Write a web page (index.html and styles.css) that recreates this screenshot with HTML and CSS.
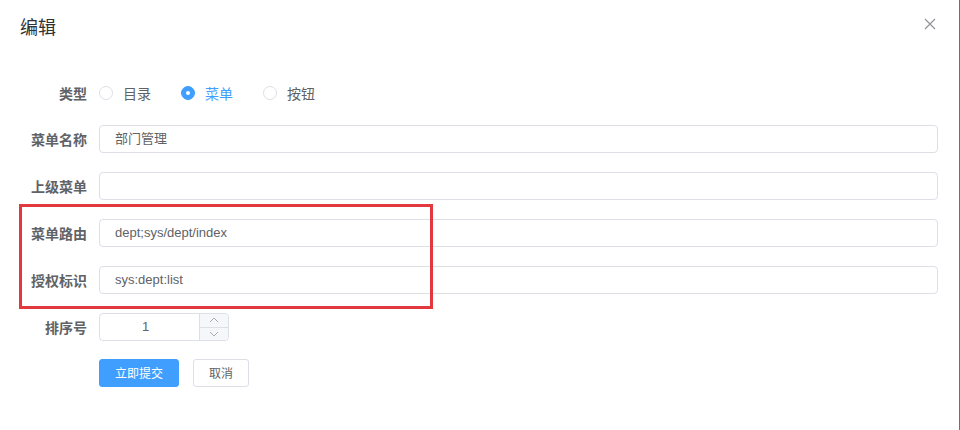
FILE: index.html
```html
<!DOCTYPE html>
<html lang="zh-CN">
<head>
<meta charset="utf-8">
<title>编辑</title>
<link rel="stylesheet" href="styles.css">
</head>
<body>
<div class="dialog">
  <div class="header">
    <span class="title">编辑</span>
    <svg class="close" width="12" height="12" viewBox="0 0 12 12"><path d="M1 1L11 11M11 1L1 11" stroke="#909399" stroke-width="1.2" fill="none"/></svg>
  </div>
  <form class="form">
    <div class="item radio-item">
      <label class="label">类型</label>
      <div class="radios">
        <span class="radio"><span class="dot"></span><span class="rtext">目录</span></span>
        <span class="radio checked"><span class="dot"></span><span class="rtext">菜单</span></span>
        <span class="radio"><span class="dot"></span><span class="rtext">按钮</span></span>
      </div>
    </div>
    <div class="item">
      <label class="label">菜单名称</label>
      <div class="input">部门管理</div>
    </div>
    <div class="item">
      <label class="label">上级菜单</label>
      <div class="input"></div>
    </div>
    <div class="item">
      <label class="label">菜单路由</label>
      <div class="input">dept;sys/dept/index</div>
    </div>
    <div class="item">
      <label class="label">授权标识</label>
      <div class="input">sys:dept:list</div>
    </div>
    <div class="item">
      <label class="label">排序号</label>
      <div class="number">
        <span class="num-value">1</span>
        <span class="num-ctrl">
          <span class="num-btn up"><svg width="10" height="6" viewBox="0 0 10 6"><path d="M1 5L5 1L9 5" stroke="#a8abb2" stroke-width="1" fill="none"/></svg></span>
          <span class="num-btn down"><svg width="10" height="6" viewBox="0 0 10 6"><path d="M1 1L5 5L9 1" stroke="#a8abb2" stroke-width="1" fill="none"/></svg></span>
        </span>
      </div>
    </div>
    <div class="item buttons">
      <span class="btn primary">立即提交</span>
      <span class="btn">取消</span>
    </div>
  </form>
  <div class="highlight"></div>
</div>
</body>
</html>
```

FILE: styles.css
```css
html, body {
  margin: 0;
  padding: 0;
  background: #fff;
}
body {
  font-family: "Noto Sans CJK SC", "Open Sans", sans-serif;
  color: #606266;
}
.dialog {
  position: relative;
  width: 960px;
  height: 430px;
  box-sizing: border-box;
  border-right: 1px solid #707070;
  background: #fff;
}
.header {
  display: flex;
  justify-content: space-between;
  align-items: flex-start;
  padding: 14px 23px 0 20px;
}
.title {
  font-size: 18px;
  line-height: 24px;
  color: #303133;
}
.close {
  margin-top: 4px;
}
.form {
  margin: 41px 0 0 0;
  padding: 0 21px 0 19px;
}
.item {
  display: flex;
  align-items: center;
  height: 28px;
  margin-bottom: 19px;
}
.radio-item {
  margin-bottom: 18px;
}
.label {
  width: 80px;
  box-sizing: border-box;
  padding-right: 12px;
  text-align: right;
  font-size: 14px;
  font-weight: 700;
  line-height: 28px;
  color: #606266;
  flex: none;
}
.radios {
  display: flex;
  align-items: center;
}
.radio {
  display: flex;
  align-items: center;
  margin-right: 30px;
  font-size: 14px;
  color: #606266;
}
.dot {
  width: 14px;
  height: 14px;
  box-sizing: border-box;
  border: 1px solid #dcdfe6;
  border-radius: 50%;
  background: #fff;
  display: flex;
  align-items: center;
  justify-content: center;
}
.rtext {
  padding-left: 10px;
  line-height: 14px;
}
.radio.checked .dot {
  background: #409eff;
  border-color: #409eff;
}
.radio.checked .dot::after {
  content: "";
  width: 4px;
  height: 4px;
  border-radius: 50%;
  background: #fff;
}
.radio.checked .rtext {
  color: #409eff;
}
.input {
  flex: 1;
  height: 28px;
  box-sizing: border-box;
  border: 1px solid #dcdfe6;
  border-radius: 4px;
  padding: 0 15px;
  font-family: "Liberation Sans", "Noto Sans CJK SC", sans-serif;
  font-size: 13px;
  line-height: 26px;
  color: #606266;
}
.number {
  width: 130px;
  height: 28px;
  box-sizing: border-box;
  border: 1px solid #dcdfe6;
  border-radius: 4px;
  display: flex;
}
.num-value {
  flex: 1;
  text-align: center;
  font-family: "Liberation Sans", sans-serif;
  font-size: 13px;
  line-height: 26px;
  color: #606266;
  padding-right: 8px;
}
.num-ctrl {
  width: 28px;
  display: flex;
  flex-direction: column;
  border-left: 1px solid #dcdfe6;
  background: #f5f7fa;
  border-radius: 0 4px 4px 0;
}
.num-btn {
  flex: 1;
  display: flex;
  align-items: center;
  justify-content: center;
}
.num-btn.up {
  border-bottom: 1px solid #dcdfe6;
}
.buttons {
  padding-left: 80px;
  margin-top: -1px;
}
.btn {
  height: 28px;
  box-sizing: border-box;
  border: 1px solid #dcdfe6;
  border-radius: 3px;
  padding: 0 15px;
  font-size: 12px;
  line-height: 26px;
  color: #606266;
  background: #fff;
  margin-right: 14px;
}
.btn.primary {
  background: #409eff;
  border-color: #409eff;
  color: #fff;
}
.highlight {
  position: absolute;
  left: 19px;
  top: 204px;
  width: 414px;
  height: 105px;
  box-sizing: border-box;
  border: 3px solid #e2393e;
}
```
